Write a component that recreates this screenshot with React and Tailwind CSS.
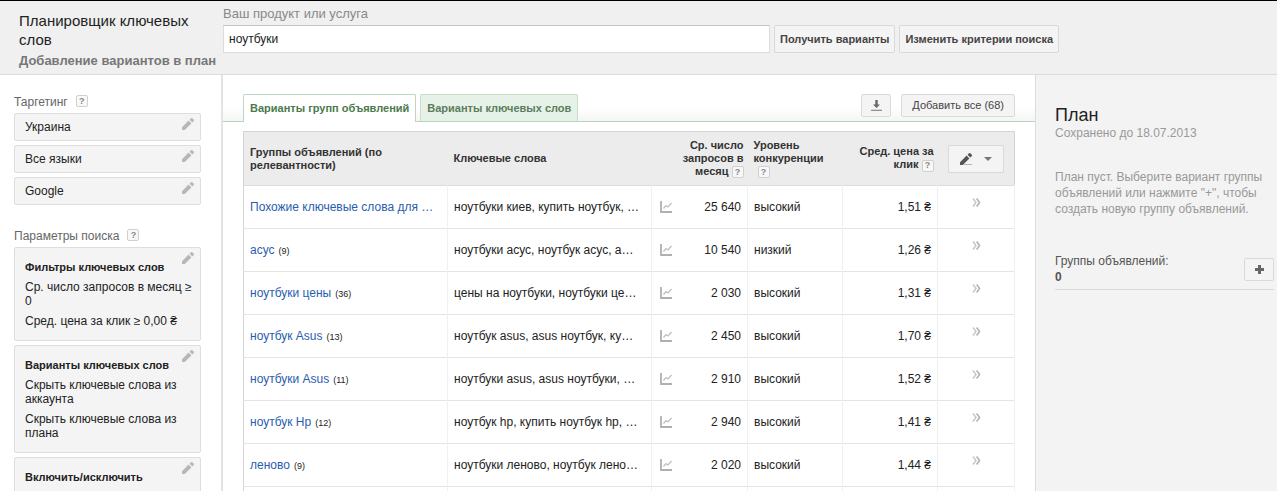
import clsx from "clsx";

const PencilIcon = ({ className, underline }) => (
  <svg viewBox="0 0 12 12" className={className} fill="currentColor" aria-hidden="true">
    <path d="M0 12V9.2L6.6 2.6 9.4 5.4 2.8 12zM7.5 1.7 8.8.4a1.2 1.2 0 0 1 1.7 0l1.1 1.1a1.2 1.2 0 0 1 0 1.7L10.3 4.5z" />
    {underline && <path d="M4.5 11H12V12H3.5z" opacity=".4" />}
  </svg>
);

const ChartIcon = () => (
  <svg viewBox="0 0 12 12" className="w-3 h-3" fill="none" aria-hidden="true">
    <path d="M1 0V11H12" stroke="#b0b0b0" strokeWidth="1.8" />
    <path d="M3.5 7.5 6 4.5 8 6 11.5 2" stroke="#bdbdbd" strokeWidth="1.2" />
  </svg>
);

const DownloadIcon = () => (
  <svg viewBox="0 0 11 11" className="w-[11px] h-[11px]" fill="#666" aria-hidden="true">
    <path d="M4.3 0H6.7V4.5H9L5.5 8 2 4.5H4.3z" />
    <path d="M0 9.7H11V11H0z" opacity=".7" />
  </svg>
);

const ChevronsIcon = () => (
  <svg viewBox="0 0 9 9" className="w-[9px] h-[9px]" fill="none" strokeWidth="1.5" aria-hidden="true">
    <path d="M1 .5 4 4.5 1 8.5" stroke="#c8c8c8" />
    <path d="M4.6.5 7.6 4.5 4.6 8.5" stroke="#b0b0b0" />
  </svg>
);

const PlusIcon = () => (
  <svg viewBox="0 0 9 9" className="w-[9px] h-[9px]" fill="#666" aria-hidden="true">
    <path d="M3 0H6V3H9V6H6V9H3V6H0V3H3z" />
  </svg>
);

const Help = ({ className }) => (
  <button
    className={clsx(
      "w-3 h-3 inline-flex items-center justify-center rounded-xs border border-[#d0d0d0] bg-[#f8f8f8] text-[9px] leading-none font-bold text-[#888]",
      className
    )}
  >
    ?
  </button>
);

const Button = ({ className, children, ...props }) => (
  <button
    className={clsx(
      "flex items-center justify-center shrink-0 whitespace-nowrap rounded-xs border border-[#d9d9d9] bg-[#f4f4f4] text-[11px] text-[#444]",
      className
    )}
    {...props}
  >
    {children}
  </button>
);

const EditButton = () => (
  <button className="absolute top-1 right-1.5" aria-label="Изменить">
    <PencilIcon className="w-3 h-3 text-[#b8b8b8]" />
  </button>
);

const Card = ({ title, lines = [] }) => (
  <section className="relative rounded-xs border border-[#dedede] bg-[#f4f4f4] pl-2.5 pr-1 pt-3 pb-3 text-xs leading-[14px] text-[#222]">
    <h3 className="text-[11px] font-bold">{title}</h3>
    {lines.map((line) => (
      <p key={line} className="mt-1.5">
        {line}
      </p>
    ))}
    <EditButton />
  </section>
);

const targeting = ["Украина", "Все языки", "Google"];

const filters = [
  {
    title: "Фильтры ключевых слов",
    lines: ["Ср. число запросов в месяц ≥ 0", "Сред. цена за клик ≥ 0,00 ₴"],
  },
  {
    title: "Варианты ключевых слов",
    lines: ["Скрыть ключевые слова из аккаунта", "Скрыть ключевые слова из плана"],
  },
  { title: "Включить/исключить" },
];

const groups = [
  { name: "Похожие ключевые слова для …", words: "ноутбуки киев, купить ноутбук, …", volume: "25 640", level: "высокий", price: "1,51 ₴" },
  { name: "асус", count: 9, words: "ноутбуки асус, ноутбук асус, а…", volume: "10 540", level: "низкий", price: "1,26 ₴" },
  { name: "ноутбуки цены", count: 36, words: "цены на ноутбуки, ноутбуки це…", volume: "2 030", level: "высокий", price: "1,31 ₴" },
  { name: "ноутбук Asus", count: 13, words: "ноутбук asus, asus ноутбук, ку…", volume: "2 450", level: "высокий", price: "1,70 ₴" },
  { name: "ноутбуки Asus", count: 11, words: "ноутбуки asus, asus ноутбуки, …", volume: "2 910", level: "высокий", price: "1,52 ₴" },
  { name: "ноутбук Hp", count: 12, words: "ноутбук hp, купить ноутбук hp, …", volume: "2 940", level: "высокий", price: "1,41 ₴" },
  { name: "леново", count: 9, words: "ноутбуки леново, ноутбук лено…", volume: "2 020", level: "высокий", price: "1,44 ₴" },
];

const Header = () => (
  <header className="flex shrink-0 h-[75px] border-t border-t-black border-b border-b-[#dcdcdc] bg-[#f0f0f0]">
    <div className="w-[223px] shrink-0 pl-[19px] pt-2.5">
      <h1 className="text-[15px] leading-[19px] text-[#222]">
        Планировщик ключевых
        <br />
        слов
      </h1>
      <p className="mt-1 whitespace-nowrap text-[13px] leading-4 font-bold text-[#777]">
        Добавление вариантов в план
      </p>
    </div>
    <form className="flex-1 pt-1" onSubmit={(e) => e.preventDefault()}>
      <label htmlFor="product" className="block text-[13px] leading-[18px] text-[#888]">
        Ваш продукт или услуга
      </label>
      <div className="mt-0.5 flex gap-1">
        <input
          id="product"
          defaultValue="ноутбуки"
          className="w-[547px] h-7 border border-[#dcdcdc] border-t-[#c4c4c4] bg-white px-[5px] text-xs text-[#222]"
        />
        <Button type="submit" className="h-7 px-[5px] font-bold">Получить варианты</Button>
        <Button type="button" className="h-7 px-[5px] font-bold">Изменить критерии поиска</Button>
      </div>
    </form>
  </header>
);

const Sidebar = () => (
  <aside className="w-[223px] shrink-0 border-r-2 border-[#e4e4e4] pl-3.5 pr-5 pt-4">
    <h2 className="flex gap-2 text-xs leading-[22px] text-[#666]">
      Таргетинг <Help className="mt-1" />
    </h2>
    <div className="space-y-1">
      {targeting.map((item) => (
        <div
          key={item}
          className="relative flex items-center h-7 rounded-xs border border-[#dedede] bg-[#f4f4f4] px-2.5 text-xs text-[#222]"
        >
          {item}
          <EditButton />
        </div>
      ))}
    </div>
    <h2 className="mt-5 flex gap-2 text-xs leading-[22px] text-[#666]">
      Параметры поиска <Help className="mt-1" />
    </h2>
    <div className="space-y-1">
      {filters.map((f) => (
        <Card key={f.title} title={f.title} lines={f.lines} />
      ))}
    </div>
  </aside>
);

const Tabs = () => (
  <div className="flex items-end h-[47px] px-5 border-b border-[#b9d6bd] bg-linear-to-b from-white from-70% to-[#f5f5f5]">
    <div className="flex gap-1 text-[11px] font-bold" role="tablist">
      <button role="tab" aria-selected="true" className="-mb-px h-7 px-1.5 rounded-t-xs border border-b-0 border-[#bcd6bf] bg-white text-[#4a7a4c]">
        Варианты групп объявлений
      </button>
      <button role="tab" aria-selected="false" className="h-[27px] px-1.5 rounded-t-xs border border-b-0 border-[#c5dfc8] bg-[#e6f1e7] text-[#5c7d5e]">
        Варианты ключевых слов
      </button>
    </div>
    <div className="ml-auto mb-1 flex gap-2.5">
      <Button className="w-[30px] h-[23px]" aria-label="Скачать">
        <DownloadIcon />
      </Button>
      <Button className="h-[23px] px-2.5">Добавить все (68)</Button>
    </div>
  </div>
);

const GroupsTable = () => (
  <table className="w-full table-fixed border-collapse border border-[#d4d4d4] text-xs text-[#222]">
    <colgroup>
      <col />
      <col className="w-[204px]" />
      <col className="w-24" />
      <col className="w-[95px]" />
      <col className="w-[95px]" />
      <col className="w-[77px]" />
    </colgroup>
    <thead className="bg-[#ececec] text-[11px] leading-[13px] text-[#333]">
      <tr className="h-[54px] border-b border-[#dcdcdc]">
        <th className="px-1.5 text-left">
          Группы объявлений (по
          <br />
          релевантности)
        </th>
        <th className="px-1.5 text-left">Ключевые слова</th>
        <th className="pr-1 text-right">
          Ср. число
          <br />
          запросов в
          <br />
          месяц <Help />
        </th>
        <th className="px-1.5 text-left">
          Уровень
          <br />
          конкуренции
          <br />
          <Help className="ml-1" />
        </th>
        <th className="pr-1 text-right">
          Сред. цена за
          <br />
          клик <Help />
        </th>
        <th className="px-2.5">
          <Button className="w-full h-7 gap-3" aria-label="Изменить">
            <PencilIcon className="w-3 h-3 text-[#555]" underline />
            <span className="border-x-4 border-t-4 border-x-transparent border-t-[#777]" />
          </Button>
        </th>
      </tr>
    </thead>
    <tbody className="[&_td]:border-r [&_td]:border-[#f0f0f0]">
      {groups.map((g) => (
        <tr key={g.name} className="h-[43px] border-b border-[#e4e4e4] whitespace-nowrap">
          <td className="px-1.5 overflow-hidden">
            <a href="#" className="text-[#2a5db0]">
              {g.name}
            </a>
            {g.count && <span className="ml-1 text-[9px]">({g.count})</span>}
          </td>
          <td className="px-1.5 overflow-hidden">{g.words}</td>
          <td className="pl-2 pr-1.5">
            <div className="flex items-center justify-between">
              <ChartIcon />
              {g.volume}
            </div>
          </td>
          <td className="px-1.5">{g.level}</td>
          <td className="pr-1.5 text-right">{g.price}</td>
          <td className="pb-2 text-center">
            <button aria-label="Добавить в план">
              <ChevronsIcon />
            </button>
          </td>
        </tr>
      ))}
      <tr className="h-[43px]">
        <td />
        <td />
        <td />
        <td />
        <td />
        <td />
      </tr>
    </tbody>
  </table>
);

const PlanPanel = () => (
  <aside className="w-[242px] shrink-0 border-l border-[#dcdcdc] bg-[#f3f3f3] pl-[19px] pr-[3px] pt-[30px]">
    <h2 className="text-lg leading-5 text-[#222]">План</h2>
    <p className="text-xs leading-4 text-[#999]">Сохранено до 18.07.2013</p>
    <p className="mt-7 text-xs leading-4 text-[#999]">
      План пуст. Выберите вариант группы объявлений или нажмите "+", чтобы
      создать новую группу объявлений.
    </p>
    <div className="mt-9 flex items-center justify-between border-b border-[#dadada] pb-1 text-xs leading-4 text-[#555]">
      <p>
        Группы объявлений:
        <br />
        <b>0</b>
      </p>
      <Button className="w-[30px] h-[23px]" aria-label="Добавить группу">
        <PlusIcon />
      </Button>
    </div>
  </aside>
);

const App = () => (
  <div className="flex flex-col h-screen overflow-hidden bg-white font-['Liberation_Sans',Arial,sans-serif]">
    <Header />
    <div className="flex flex-1 min-h-0">
      <Sidebar />
      <main className="flex-1 min-w-0">
        <Tabs />
        <div className="px-5 pt-[9px]">
          <GroupsTable />
        </div>
      </main>
      <PlanPanel />
    </div>
  </div>
);

export default App;
